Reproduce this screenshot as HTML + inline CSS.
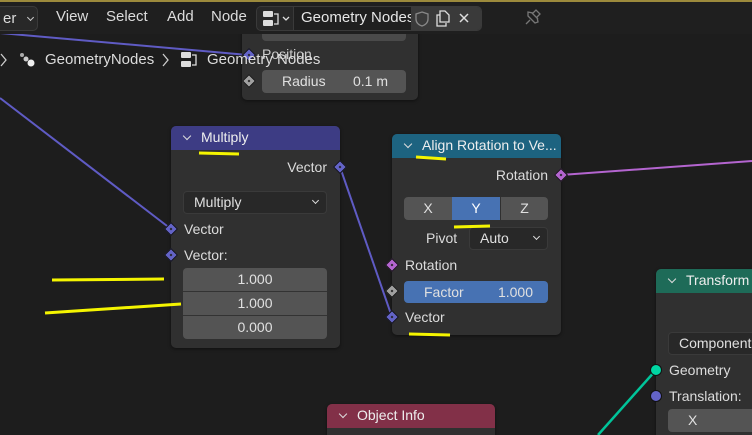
<!DOCTYPE html>
<html style="overflow:hidden;width:752px;height:435px"><head><meta charset="utf-8"><style>
*{margin:0;padding:0;box-sizing:border-box}
body{width:752px;height:435px;overflow:hidden;background:#1d1d1d;font-family:"Liberation Sans","DejaVu Sans",sans-serif;font-size:14px;color:#dcdcdc;position:relative}
.a{position:absolute}
.node{position:absolute;background:#303030;border-radius:5px;box-shadow:0 1px 3px rgba(0,0,0,.5)}
.hd{position:absolute;left:0;right:0;top:0;height:24px;border-radius:5px 5px 0 0;color:#eee;padding-left:30px;line-height:23px}
.hd:before{content:"";position:absolute;left:13px;top:7px;width:5px;height:5px;border-right:1.5px solid #ddd;border-bottom:1.5px solid #ddd;transform:rotate(45deg)}
.fld{position:absolute;background:#545454;border-radius:4px;color:#e0e0e0;text-align:center;line-height:23px}
.dd{position:absolute;background:#282828;border:1px solid #3a3a3a;border-radius:4px;line-height:21px;padding-left:10px;color:#e0e0e0}
.dd:after{content:"";position:absolute;right:8px;top:6px;width:4px;height:4px;border-right:1.3px solid #ddd;border-bottom:1.3px solid #ddd;transform:rotate(45deg)}
.lbl{position:absolute;line-height:16px;white-space:nowrap}
.r{text-align:right}
.sk{position:absolute;width:10px;height:10px;transform:rotate(45deg);border:1px solid #111}
.sk:after{content:"";position:absolute;left:3px;top:3px;width:2px;height:2px;background:#222}
.mn{position:absolute;top:8px;line-height:18px;font-size:15px}
</style></head><body>

<svg class="a" style="left:0;top:0" width="752" height="435">
<line x1="0" y1="33" x2="248" y2="55" stroke="#5f5bc4" stroke-width="2"/>
<line x1="0" y1="98" x2="171" y2="229" stroke="#5f5bc4" stroke-width="2"/>
<line x1="340" y1="167" x2="392" y2="317" stroke="#5f5bc4" stroke-width="2"/>
<line x1="561" y1="175" x2="752" y2="161" stroke="#b465d0" stroke-width="2"/>
<line x1="598" y1="435" x2="656" y2="370" stroke="#00c49a" stroke-width="2.5"/>
</svg>

<!-- top node -->
<div class="node" style="left:242px;top:10px;width:176px;height:90px"></div>
<div class="fld" style="left:262px;top:30px;width:144px;height:11px;background:#4a4a4a"></div>
<div class="fld" style="left:262px;top:70px;width:144px;height:23px;text-align:left;padding-left:20px">Radius<span style="position:absolute;right:18px">0.1 m</span></div>
<div class="sk" style="left:244px;top:76px;background:#a0a0a0"></div>
<div class="sk" style="left:244px;top:50px;background:#6363c7"></div>
<div class="lbl" style="left:262px;top:46px;color:#ccc">Position</div>

<!-- header -->
<div class="a" style="left:0;top:0;width:752px;height:2px;background:#9c8a3c"></div>
<div class="a" style="left:0;top:2px;width:752px;height:32px;background:#1f1f1f"></div>
<div class="a" style="left:-10px;top:6px;width:48px;height:25px;border:1px solid #3a3a3a;border-radius:5px;background:#282828;line-height:23px;padding-left:12px;font-size:15px">er</div>
<div class="a" style="left:28px;top:15px;width:5px;height:5px;border-right:1.3px solid #ccc;border-bottom:1.3px solid #ccc;transform:rotate(45deg)"></div>
<div class="mn" style="left:56px">View</div>
<div class="mn" style="left:106px">Select</div>
<div class="mn" style="left:167px">Add</div>
<div class="mn" style="left:211px">Node</div>
<div class="a" style="left:256px;top:6px;width:226px;height:25px;border-radius:5px;background:#282828;border:1px solid #3a3a3a"></div>
<div class="a" style="left:293px;top:7px;width:118px;height:23px;background:#1f1f1f;border-left:1px solid #3a3a3a"></div>
<div class="a" style="left:301px;top:8px;line-height:20px;font-size:15px;color:#e6e6e6;white-space:nowrap">Geometry Nodes</div>
<div class="a" style="left:411px;top:7px;width:70px;height:23px;background:#3a3a3a;border-radius:0 4px 4px 0"></div>
<svg class="a" style="left:262px;top:9px" width="300" height="20">
<rect x="1" y="2" width="10" height="6" rx="1" fill="#ddd"/><rect x="1" y="11" width="10" height="6" rx="1" fill="#ddd"/>
<path d="M12 5h4v10h-4" stroke="#ddd" fill="none" stroke-width="1.3"/>
<path d="M21 8l3 3 3-3" stroke="#ddd" fill="none" stroke-width="1.3"/>
<path d="M160 3l6 2v5c0 4-3 6-6 7-3-1-6-3-6-7v-5z" stroke="#888" fill="none" stroke-width="1.3"/>
<path d="M178 6h-3v11h9v-3M181 2h-3v11h9v-7l-4-4z" stroke="#ddd" fill="none" stroke-width="1.3"/>
<path d="M198 5l8 8M206 5l-8 8" stroke="#ddd" stroke-width="1.5"/>
<path d="M270 4l6 6M268 11l-4 4M266 7l7 7 3-1-1-5 3-3-4-4-3 3-5-1z" stroke="#777" fill="none" stroke-width="1.3"/>
</svg>

<!-- breadcrumbs -->
<svg class="a" style="left:0;top:50px" width="240" height="20">
<path d="M1 4l5 6-5 6" stroke="#ccc" fill="none" stroke-width="1.3"/>
<circle cx="22" cy="5" r="2" fill="#aaa"/><circle cx="26" cy="9" r="2.5" fill="#ccc"/><circle cx="31" cy="13" r="3.5" fill="#eee"/>
<path d="M163 4l5 6-5 6" stroke="#ccc" fill="none" stroke-width="1.3"/>
<rect x="181" y="2" width="10" height="6" rx="1" fill="#ddd"/><rect x="181" y="11" width="10" height="6" rx="1" fill="#ddd"/>
<path d="M192 5h4v10h-4" stroke="#ddd" fill="none" stroke-width="1.3"/>
</svg>
<div class="a" style="left:45px;top:51px;line-height:18px;font-size:15px">GeometryNodes</div>
<div class="a" style="left:207px;top:51px;line-height:18px;font-size:15px;white-space:nowrap">Geometry Nodes</div>

<!-- Multiply -->
<div class="node" style="left:171px;top:126px;width:169px;height:222px"></div>
<div class="hd" style="left:171px;top:126px;width:169px;background:#3d3c84;position:absolute">Multiply</div>
<div class="lbl r" style="left:227px;width:100px;top:159px">Vector</div>
<div class="sk" style="left:335px;top:162px;background:#6363c7"></div>
<div class="dd" style="left:183px;top:191px;width:144px;height:23px">Multiply</div>
<div class="sk" style="left:166px;top:224px;background:#6363c7"></div>
<div class="lbl" style="left:184px;top:221px">Vector</div>
<div class="sk" style="left:166px;top:250px;background:#6363c7"></div>
<div class="lbl" style="left:184px;top:247px">Vector:</div>
<div class="fld" style="left:183px;top:268px;width:144px;height:71px;background:#545454"></div>
<div class="fld" style="left:183px;top:268px;width:144px;height:23px;background:none">1.000</div>
<div class="a" style="left:183px;top:291px;width:144px;height:1px;background:#333"></div>
<div class="fld" style="left:183px;top:292px;width:144px;height:23px;background:none">1.000</div>
<div class="a" style="left:183px;top:315px;width:144px;height:1px;background:#333"></div>
<div class="fld" style="left:183px;top:316px;width:144px;height:23px;background:none">0.000</div>

<!-- Align -->
<div class="node" style="left:392px;top:134px;width:169px;height:201px"></div>
<div class="hd" style="left:392px;top:134px;width:169px;background:#1d6380;position:absolute;white-space:nowrap;overflow:hidden">Align Rotation to Ve...</div>
<div class="lbl r" style="left:448px;width:100px;top:167px">Rotation</div>
<div class="sk" style="left:556px;top:170px;background:#b465d0"></div>
<div class="fld" style="left:404px;top:197px;width:48px;height:23px;border-radius:4px 0 0 4px">X</div>
<div class="fld" style="left:452px;top:197px;width:48px;height:23px;border-radius:0;background:#4772b3;color:#fff">Y</div>
<div class="fld" style="left:501px;top:197px;width:47px;height:23px;border-radius:0 4px 4px 0">Z</div>
<div class="lbl" style="left:426px;top:230px">Pivot</div>
<div class="dd" style="left:469px;top:227px;width:79px;height:23px">Auto</div>
<div class="sk" style="left:387px;top:260px;background:#b465d0"></div>
<div class="lbl" style="left:405px;top:257px">Rotation</div>
<div class="sk" style="left:387px;top:286px;background:#a0a0a0"></div>
<div class="fld" style="left:404px;top:281px;width:144px;height:22px;background:#4772b3;text-align:left;padding-left:20px;line-height:22px">Factor<span style="position:absolute;right:15px">1.000</span></div>
<div class="sk" style="left:387px;top:312px;background:#6363c7"></div>
<div class="lbl" style="left:405px;top:309px">Vector</div>

<!-- Transform -->
<div class="node" style="left:656px;top:269px;width:110px;height:180px"></div>
<div class="hd" style="left:656px;top:269px;width:110px;background:#1e6b58;position:absolute;white-space:nowrap">Transform</div>
<div class="dd" style="left:668px;top:332px;width:100px;height:23px">Component</div>
<div class="a" style="left:650px;top:364px;width:12px;height:12px;border-radius:50%;background:#00d6a3;border:1px solid #111"></div>
<div class="lbl" style="left:669px;top:362px">Geometry</div>
<div class="a" style="left:650px;top:390px;width:12px;height:12px;border-radius:50%;background:#6363c7;border:1px solid #111"></div>
<div class="lbl" style="left:669px;top:388px">Translation:</div>
<div class="fld" style="left:668px;top:409px;width:100px;height:23px;text-align:left;padding-left:20px">X</div>

<!-- Object Info -->
<div class="node" style="left:327px;top:404px;width:168px;height:40px"></div>
<div class="hd" style="left:327px;top:404px;width:168px;background:#823048;position:absolute">Object Info</div>

<!-- yellow annotations -->
<svg class="a" style="left:0;top:0" width="752" height="435">
<g stroke="#f5f500" stroke-width="3">
<line x1="199" y1="153" x2="239" y2="154"/>
<line x1="416" y1="157" x2="446" y2="159"/>
<line x1="454" y1="227" x2="490" y2="226"/>
<line x1="52" y1="280" x2="164" y2="279"/>
<line x1="45" y1="313" x2="181" y2="304"/>
<line x1="409" y1="334" x2="450" y2="335"/>
</g></svg>
</body></html>
